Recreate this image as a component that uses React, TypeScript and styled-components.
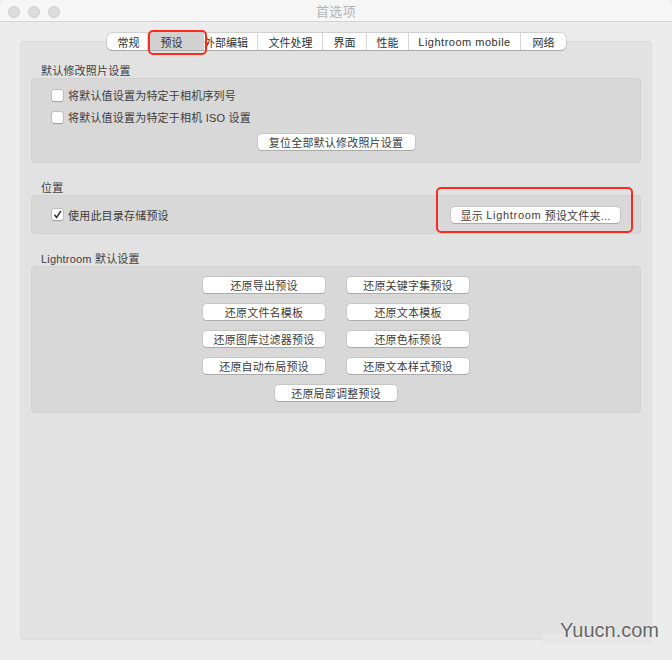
import styled, { createGlobalStyle } from 'styled-components';

const GlobalStyle = createGlobalStyle`
  html, body { margin: 0; padding: 0; }
  body {
    background: #ececec;
    font-family: "Liberation Sans", "Noto Sans CJK SC", sans-serif;
  }
`;

const Window = styled.div`
  position: relative;
  width: 672px;
  height: 660px;
  overflow: hidden;
  background: #ececec;
  color: #3c3c3c;
`;

const TitleBar = styled.div`
  position: relative;
  height: 21px;
  display: flex;
  align-items: center;
  justify-content: center;
  background: #f6f6f6;
  border-bottom: 1px solid #d3d3d3;
  border-radius: 5px 5px 0 0;
`;

const Lights = styled.div`
  position: absolute;
  left: 8px;
  top: 6px;
  display: flex;
  gap: 8px;
`;

const Light = styled.span`
  width: 12px;
  height: 12px;
  border-radius: 50%;
  background: #dcdcdc;
  border: 1px solid #d0d0d0;
  box-sizing: border-box;
`;

const Title = styled.div`
  font-size: 13px;
  letter-spacing: 0.3px;
  color: #b4b4b4;
`;

const Body = styled.div`
  padding: 19px 20px 20px;
`;

const Panel = styled.div`
  position: relative;
  height: 599px;
  box-sizing: border-box;
  padding: 22px 10px 0;
  background: #e2e2e2;
  border: 1px solid #dcdcdc;
  border-radius: 4px;
`;

const Tabs = styled.div`
  position: absolute;
  top: -9px;
  left: 86px;
  display: flex;
  height: 17px;
  background: #fff;
  border-radius: 5px;
  box-shadow: 0 0 0 0.5px #b4b4b4, 0 1px 0 #9f9f9f;
`;

const Tab = styled.div<{
  $w: number;
  $active?: boolean;
  $last?: boolean;
  $pl?: number;
  $pr?: number;
  $ls?: number;
}>`
  width: ${(p) => p.$w}px;
  padding: 0 ${(p) => p.$pr ?? 0}px 0 ${(p) => p.$pl ?? 0}px;
  display: flex;
  align-items: center;
  justify-content: center;
  font-size: 11px;
  letter-spacing: ${(p) => p.$ls ?? 0}px;
  white-space: nowrap;
  color: #303030;
  background: ${(p) => (p.$active ? '#d2d2d2' : 'transparent')};
  border-right: ${(p) => (p.$last ? 'none' : '1px solid #d6d6d6')};
  box-sizing: border-box;
`;

const SectionLabel = styled.div`
  height: 14px;
  padding-left: 10px;
  font-size: 11px;
  line-height: 14px;
  letter-spacing: 0.2px;
  color: #404040;
`;

const Group = styled.div<{ $h: number; $mb: number }>`
  height: ${(p) => p.$h}px;
  margin-bottom: ${(p) => p.$mb}px;
  box-sizing: border-box;
  background: #d8d8d8;
  border: 1px solid #d2d2d2;
  border-radius: 4px;
`;

const DefaultsGroup = styled(Group)`
  display: flex;
  flex-direction: column;
  padding: 9px 0 0 20px;
`;

const CheckRow = styled.label`
  display: flex;
  align-items: center;
  gap: 5px;
  height: 14px;
  margin-bottom: 8px;
  font-size: 11px;
  letter-spacing: 0.2px;
  color: #3c3c3c;
`;

const Box = styled.span`
  width: 11px;
  height: 11px;
  flex: none;
  display: flex;
  align-items: center;
  justify-content: center;
  background: #fff;
  border-radius: 2px;
  box-shadow: 0 0 0 0.5px #aaa, 0 0.5px 1px #999;
`;

const Button = styled.div<{ $w: number }>`
  width: ${(p) => p.$w}px;
  height: 16px;
  flex: none;
  box-sizing: border-box;
  display: flex;
  align-items: center;
  justify-content: center;
  background: #fff;
  border-radius: 4px;
  box-shadow: 0 0 0 0.5px #b4b4b4, 0 1px 0 #a2a2a2;
  font-size: 11px;
  letter-spacing: 0.2px;
  color: #3c3c3c;
  white-space: pre;
`;

const Latin = styled.span`
  letter-spacing: 0.7px;
`;

const Centered = styled.div`
  display: flex;
  justify-content: center;
  margin: 2px 20px 0 0;
`;

const LocationGroup = styled(Group)`
  display: flex;
  align-items: center;
  justify-content: space-between;
  padding: 0 20px;
`;

const LocationCheck = styled(CheckRow)`
  margin: 0;
`;

const RestoreGroup = styled(Group)`
  display: grid;
  grid-template-columns: 122px 122px;
  grid-auto-rows: 16px;
  column-gap: 22px;
  row-gap: 11px;
  justify-content: center;
  padding-top: 10px;
`;

const RestoreLast = styled.div`
  grid-column: 1 / 3;
  display: flex;
  justify-content: center;
`;

const Highlight = styled.div<{ $x: number; $y: number; $w: number; $h: number }>`
  position: absolute;
  left: ${(p) => p.$x}px;
  top: ${(p) => p.$y}px;
  width: ${(p) => p.$w}px;
  height: ${(p) => p.$h}px;
  box-sizing: border-box;
  border: 2.5px solid #fb2c1e;
  border-radius: 5px;
`;

const WatermarkPatch = styled.div`
  position: absolute;
  left: 542px;
  top: 634px;
  width: 110px;
  height: 10px;
  background: #e7e7e7;
`;

const Watermark = styled.div`
  position: absolute;
  right: 13px;
  top: 619px;
  font-size: 20px;
  line-height: 23px;
  color: #666;
  text-shadow: 0 0 2px #fff;
`;

const Check = () => (
  <svg width="9" height="9" viewBox="0 0 9 9">
    <path d="M1.5 4.8 L3.6 7.4 L7.8 1" fill="none" stroke="#333" strokeWidth="1.5" />
  </svg>
);

const tabs = [
  { label: '常规', w: 41, pl: 3 },
  { label: '预设', w: 56, active: true, pr: 8 },
  { label: '外部编辑', w: 54, pr: 9 },
  { label: '文件处理', w: 65, pl: 1 },
  { label: '界面', w: 44 },
  { label: '性能', w: 42 },
  { label: 'Lightroom mobile', w: 112, ls: 0.5 },
  { label: '网络', w: 45, last: true },
];

const restore = [
  '还原导出预设',
  '还原关键字集预设',
  '还原文件名模板',
  '还原文本模板',
  '还原图库过滤器预设',
  '还原色标预设',
  '还原自动布局预设',
  '还原文本样式预设',
];

export default function App() {
  return (
    <Window>
      <GlobalStyle />
      <TitleBar>
        <Lights>
          <Light />
          <Light />
          <Light />
        </Lights>
        <Title>首选项</Title>
      </TitleBar>
      <Body>
        <Panel>
          <Tabs>
            {tabs.map((t) => (
              <Tab
                key={t.label}
                $w={t.w}
                $active={t.active}
                $last={t.last}
                $pl={t.pl}
                $pr={t.pr}
                $ls={t.ls}
              >
                {t.label}
              </Tab>
            ))}
          </Tabs>
          <SectionLabel>默认修改照片设置</SectionLabel>
          <DefaultsGroup $h={85} $mb={18}>
            <CheckRow>
              <Box />
              将默认值设置为特定于相机序列号
            </CheckRow>
            <CheckRow>
              <Box />
              将默认值设置为特定于相机 ISO 设置
            </CheckRow>
            <Centered>
              <Button $w={157}>复位全部默认修改照片设置</Button>
            </Centered>
          </DefaultsGroup>
          <SectionLabel>位置</SectionLabel>
          <LocationGroup $h={39} $mb={18}>
            <LocationCheck>
              <Box>
                <Check />
              </Box>
              使用此目录存储预设
            </LocationCheck>
            <Button $w={169}>
              显示 <Latin>Lightroom</Latin> 预设文件夹...
            </Button>
          </LocationGroup>
          <SectionLabel>Lightroom 默认设置</SectionLabel>
          <RestoreGroup $h={147} $mb={0}>
            {restore.map((label) => (
              <Button key={label} $w={122}>
                {label}
              </Button>
            ))}
            <RestoreLast>
              <Button $w={122}>还原局部调整预设</Button>
            </RestoreLast>
          </RestoreGroup>
        </Panel>
      </Body>
      <Highlight $x={148} $y={30} $w={59} $h={25} />
      <Highlight $x={436} $y={187} $w={197} $h={46} />
      <WatermarkPatch />
      <Watermark>Yuucn.com</Watermark>
    </Window>
  );
}
